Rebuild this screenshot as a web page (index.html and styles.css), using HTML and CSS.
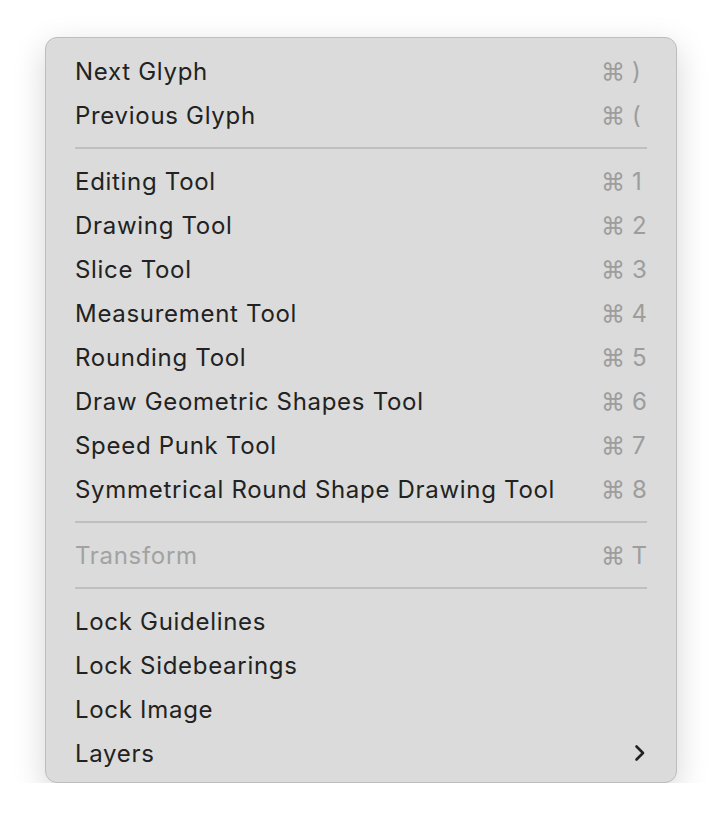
FILE: index.html
```html
<!DOCTYPE html>
<html lang="en">
<head>
    <meta charset="UTF-8">
    <title>Glyph Menu</title>
    <link rel="stylesheet" href="styles.css">
</head>
<body>
    <div class="menu">
        <div class="menu-item"><span class="label">Next Glyph</span><span class="shortcut"><span class="cmd">⌘</span><span class="key">)</span></span></div>
        <div class="menu-item"><span class="label">Previous Glyph</span><span class="shortcut"><span class="cmd">⌘</span><span class="key">(</span></span></div>
        <div class="separator"></div>
        <div class="menu-item"><span class="label">Editing Tool</span><span class="shortcut"><span class="cmd">⌘</span><span class="key">1</span></span></div>
        <div class="menu-item"><span class="label">Drawing Tool</span><span class="shortcut"><span class="cmd">⌘</span><span class="key">2</span></span></div>
        <div class="menu-item"><span class="label">Slice Tool</span><span class="shortcut"><span class="cmd">⌘</span><span class="key">3</span></span></div>
        <div class="menu-item"><span class="label">Measurement Tool</span><span class="shortcut"><span class="cmd">⌘</span><span class="key">4</span></span></div>
        <div class="menu-item"><span class="label">Rounding Tool</span><span class="shortcut"><span class="cmd">⌘</span><span class="key">5</span></span></div>
        <div class="menu-item"><span class="label">Draw Geometric Shapes Tool</span><span class="shortcut"><span class="cmd">⌘</span><span class="key">6</span></span></div>
        <div class="menu-item"><span class="label">Speed Punk Tool</span><span class="shortcut"><span class="cmd">⌘</span><span class="key">7</span></span></div>
        <div class="menu-item"><span class="label">Symmetrical Round Shape Drawing Tool</span><span class="shortcut"><span class="cmd">⌘</span><span class="key">8</span></span></div>
        <div class="separator"></div>
        <div class="menu-item disabled"><span class="label">Transform</span><span class="shortcut"><span class="cmd">⌘</span><span class="key">T</span></span></div>
        <div class="separator"></div>
        <div class="menu-item"><span class="label">Lock Guidelines</span></div>
        <div class="menu-item"><span class="label">Lock Sidebearings</span></div>
        <div class="menu-item"><span class="label">Lock Image</span></div>
        <div class="menu-item">
            <span class="label">Layers</span>
            <svg class="chevron" width="12" height="18" viewBox="0 0 12 18">
                <polyline points="2.5,2.5 9,9 2.5,15.5" fill="none" stroke="#222" stroke-width="2.6" stroke-linecap="round" stroke-linejoin="round"/>
            </svg>
        </div>
    </div>
</body>
</html>
```

FILE: styles.css
```css
body {
    margin: 0;
    background-color: #ffffff;
    font-family: Inter, "Noto Sans", sans-serif;
}
.menu {
    width: 572px;
    margin: 37px 0 0 45px;
    padding: 11px 29px 7px 29px;
    background-color: #dadbda;
    border: 1px solid #bdbdbd;
    border-radius: 12px;
    box-shadow: 0 10px 32px rgba(0, 0, 0, 0.17);
}
.menu-item {
    display: flex;
    align-items: center;
    justify-content: space-between;
    height: 44px;
    font-size: 24px;
    color: #222222;
}
.label {
    letter-spacing: 0.7px;
}
.menu-item.disabled {
    color: #a2a2a2;
}
.shortcut {
    display: flex;
    align-items: baseline;
    width: 46px;
    color: #9d9d9d;
}
.cmd {
    font-family: Inter, "DejaVu Sans", sans-serif;
    font-size: 24px;
    width: 31px;
}
.chevron {
    margin-right: 1px;
}
.separator {
    height: 2px;
    margin: 10px 0;
    background-color: #bfbfbf;
}
```
